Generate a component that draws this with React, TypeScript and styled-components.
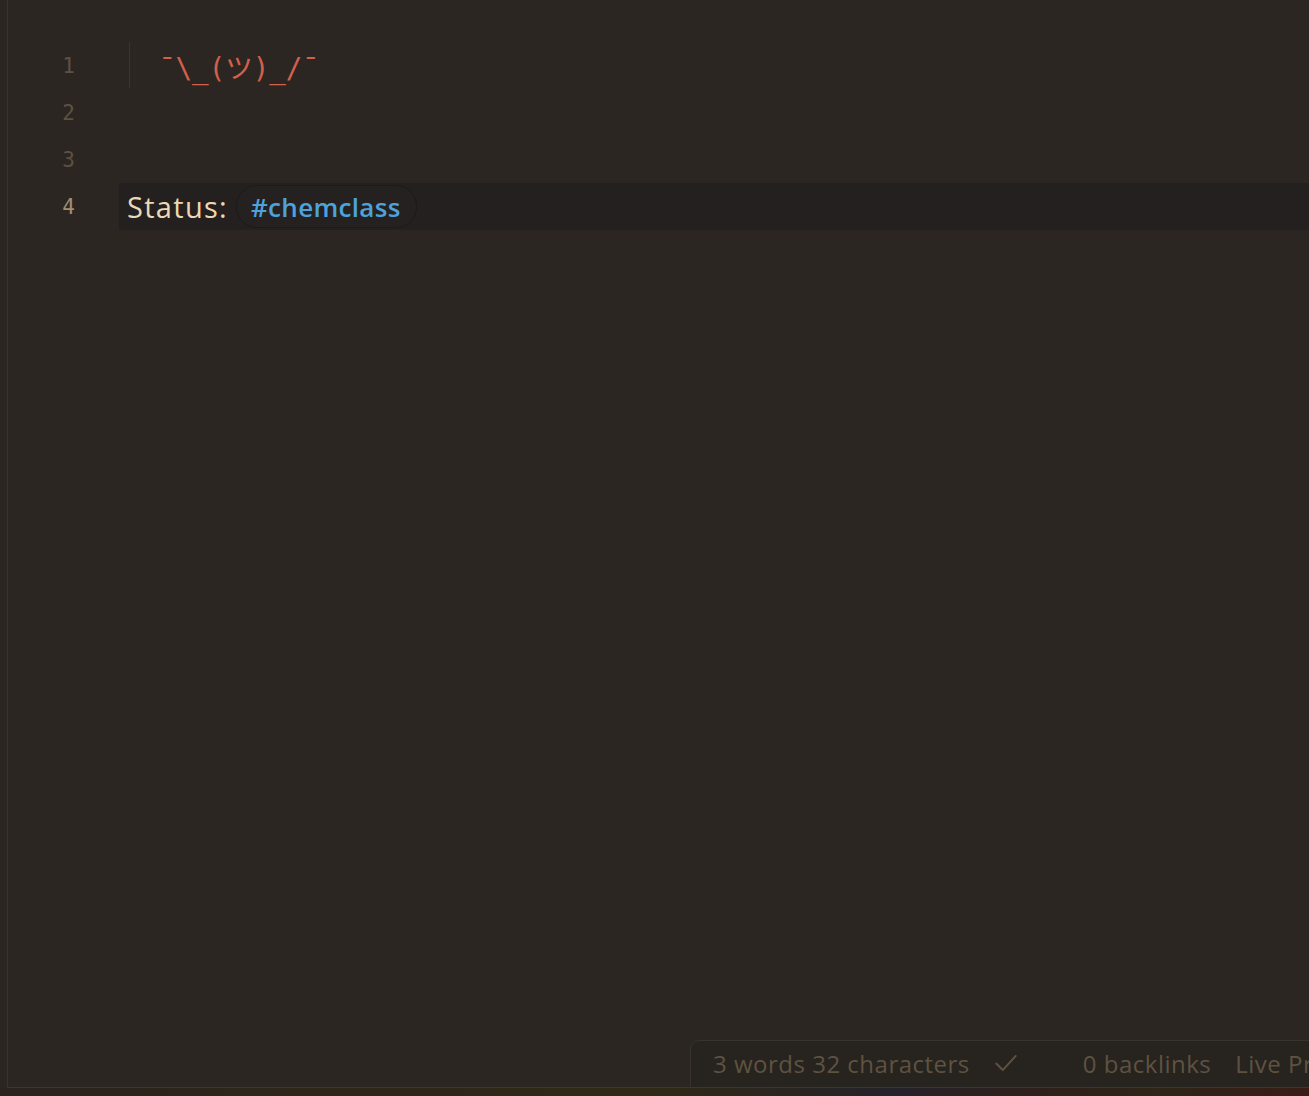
import React from "react";
import styled, { createGlobalStyle } from "styled-components";

const Global = createGlobalStyle`
  html, body { margin: 0; padding: 0; background: #2b2622; overflow: hidden; }
  #root { height: 1096px; }
`;

const Frame = styled.div`
  height: 1096px;
  display: flex;
  flex-direction: column;
  background: #2b2622;
`;

const Workspace = styled.div`
  flex: 1;
  display: flex;
  min-height: 0;
`;

const LeftEdge = styled.div`
  width: 7px;
  border-right: 1px solid #3a342d;
`;

const EditorPane = styled.div`
  position: relative;
  flex: 1;
  border-bottom: 1px solid #3d362b;
  overflow: hidden;
`;

const Lines = styled.div`
  padding-top: 42px;
  display: flex;
  flex-direction: column;
`;

const Row = styled.div`
  height: 47px;
  display: flex;
  align-items: center;
`;

const Gutter = styled.div<{ $active?: boolean }>`
  width: 67px;
  padding-right: 44px;
  text-align: right;
  font-family: "DejaVu Sans Mono", monospace;
  font-size: 21px;
  color: ${(p) => (p.$active ? "#a38d73" : "#5d5141")};
`;

const Content = styled.div<{ $active?: boolean }>`
  flex: 1;
  height: 100%;
  display: flex;
  align-items: center;
  background: ${(p) => (p.$active ? "#242020" : "transparent")};
`;

const Guide = styled.div`
  width: 1px;
  align-self: stretch;
  margin: 0 0 1px 10px;
  background: #3b352e;
`;

const Code = styled.span`
  margin-left: 29px;
  font-family: "DejaVu Sans Mono", "Noto Sans CJK JP", monospace;
  font-size: 27.5px;
  color: #d2604c;
`;

const Label = styled.span`
  margin-left: 8px;
  font-family: "Open Sans", sans-serif;
  font-size: 29px;
  letter-spacing: 1.3px;
  color: #eed7b4;
`;

const Tag = styled.span`
  margin-left: 8px;
  height: 41px;
  display: inline-flex;
  align-items: center;
  padding: 0 15px 0 14px;
  border-radius: 21px;
  border: 1px solid #1d1a18;
  background: #252120;
  font-family: "Open Sans", sans-serif;
  font-weight: 600;
  font-size: 26px;
  letter-spacing: 0.3px;
  color: #4ea2dc;
`;

const StatusBar = styled.div`
  position: absolute;
  left: 682px;
  right: -200px;
  bottom: 0;
  height: 47px;
  box-sizing: border-box;
  padding: 0 0 2px 22px;
  display: flex;
  align-items: center;
  background: #27231f;
  border: 1px solid #3a332b;
  border-bottom: none;
  border-top-left-radius: 9px;
  font-family: "Open Sans", sans-serif;
  font-size: 24px;
  letter-spacing: 0.5px;
  color: #5e5241;
  white-space: nowrap;
`;

const StatusItem = styled.span<{ $gap?: number }>`
  flex-shrink: 0;
  margin-left: ${(p) => p.$gap ?? 0}px;
`;

const Check = styled.svg`
  flex-shrink: 0;
  width: 26px;
  height: 26px;
  margin-left: 23px;
`;

const Glow = styled.div`
  height: 8px;
  background: linear-gradient(
    90deg,
    #2a231e 0%,
    #2e2718 30%,
    #2f2916 50%,
    #25222a 68%,
    #2f1f1a 80%,
    #2e2518 88%,
    #3a1c14 100%
  );
`;

export default function App() {
  return (
    <>
      <Global />
      <Frame>
        <Workspace>
          <LeftEdge />
          <EditorPane>
            <Lines>
              <Row>
                <Gutter>1</Gutter>
                <Content>
                  <Guide />
                  <Code>¯\_(ツ)_/¯</Code>
                </Content>
              </Row>
              <Row>
                <Gutter>2</Gutter>
                <Content />
              </Row>
              <Row>
                <Gutter>3</Gutter>
                <Content />
              </Row>
              <Row>
                <Gutter $active>4</Gutter>
                <Content $active>
                  <Label>Status:</Label>
                  <Tag>#chemclass</Tag>
                </Content>
              </Row>
            </Lines>
            <StatusBar>
              <StatusItem>3 words 32 characters</StatusItem>
              <Check viewBox="0 0 24 24" fill="none" stroke="#5e5241" strokeWidth="1.8" strokeLinecap="round" strokeLinejoin="round">
                <polyline points="3 12.5 9 18.5 21 5.5" />
              </Check>
              <StatusItem $gap={64}>0 backlinks</StatusItem>
              <StatusItem $gap={24}>Live Preview</StatusItem>
            </StatusBar>
          </EditorPane>
        </Workspace>
        <Glow />
      </Frame>
    </>
  );
}
